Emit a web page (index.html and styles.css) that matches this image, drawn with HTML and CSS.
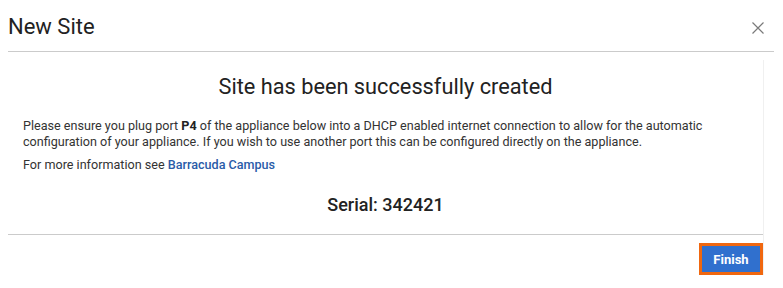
FILE: index.html
```html
<!DOCTYPE html>
<html>
<head>
<meta charset="utf-8">
<link rel="stylesheet" href="styles.css">
</head>
<body>
<div class="dialog">
  <div class="header">
    <h1 class="title">New Site</h1>
    <button class="close" aria-label="Close">
      <svg width="12" height="12" viewBox="0 0 12 12"><path d="M0.5 0.5 L11.5 11.5 M11.5 0.5 L0.5 11.5" stroke="#7a7a7a" stroke-width="1.2" fill="none"/></svg>
    </button>
  </div>
  <div class="content">
    <h2 class="heading">Site has been successfully created</h2>
    <p class="para">Please ensure you plug port <b>P4</b> of the appliance below into a DHCP enabled internet connection to allow for the automatic configuration of your appliance. If you wish to use another port this can be configured directly on the appliance.</p>
    <p class="para more">For more information see <a class="link" href="#">Barracuda Campus</a></p>
    <div class="serial">Serial: 342421</div>
    <div class="footer">
      <button class="finish">Finish</button>
    </div>
  </div>
</div>
</body>
</html>
```

FILE: styles.css
```css
* { box-sizing: border-box; }
html, body { margin: 0; padding: 0; background: #fff; }
body { font-family: Roboto, "Noto Sans", Arial, sans-serif; color: #333; width: 783px; height: 288px; overflow: hidden; }
.dialog { padding: 0 9px 0 8px; }
.header { display: flex; align-items: flex-start; justify-content: space-between; height: 52px; border-bottom: 1px solid #cbcbcb; padding-top: 14px; }
.title { margin: 0; font-size: 22px; line-height: 26px; font-weight: 400; color: #222; }
.close { border: 0; background: none; padding: 0; margin: 8px 10px 0 0; width: 12px; height: 12px; display: block; cursor: pointer; }
.close svg { display: block; }
.content { margin-top: 8px; width: 756px; border-right: 1px solid #f0f0f0; padding-top: 14px; }
.heading { margin: 0; text-align: center; font-size: 21.75px; line-height: 26px; font-weight: 400; color: #222; }
.para { margin: 18px 0 0; padding: 0 15px; font-size: 12.6px; line-height: 16px; color: #333; }
.para b { font-weight: 700; color: #222; }
.more { margin-top: 7px; }
.link { color: #2a5ca8; text-decoration: none; font-weight: 500; }
.serial { margin-top: 21px; text-align: center; font-size: 18px; line-height: 22px; font-weight: 500; color: #222; }
.footer { margin-top: 18px; border-top: 1px solid #cbcbcb; padding-top: 8px; display: flex; justify-content: flex-end; }
.finish { width: 64px; height: 32px; border: 3px solid #f0670f; background: #3070ce; color: #fff; font-family: Roboto, Arial, sans-serif; font-size: 13px; font-weight: 700; padding: 0; margin: 0; cursor: pointer; }
```
